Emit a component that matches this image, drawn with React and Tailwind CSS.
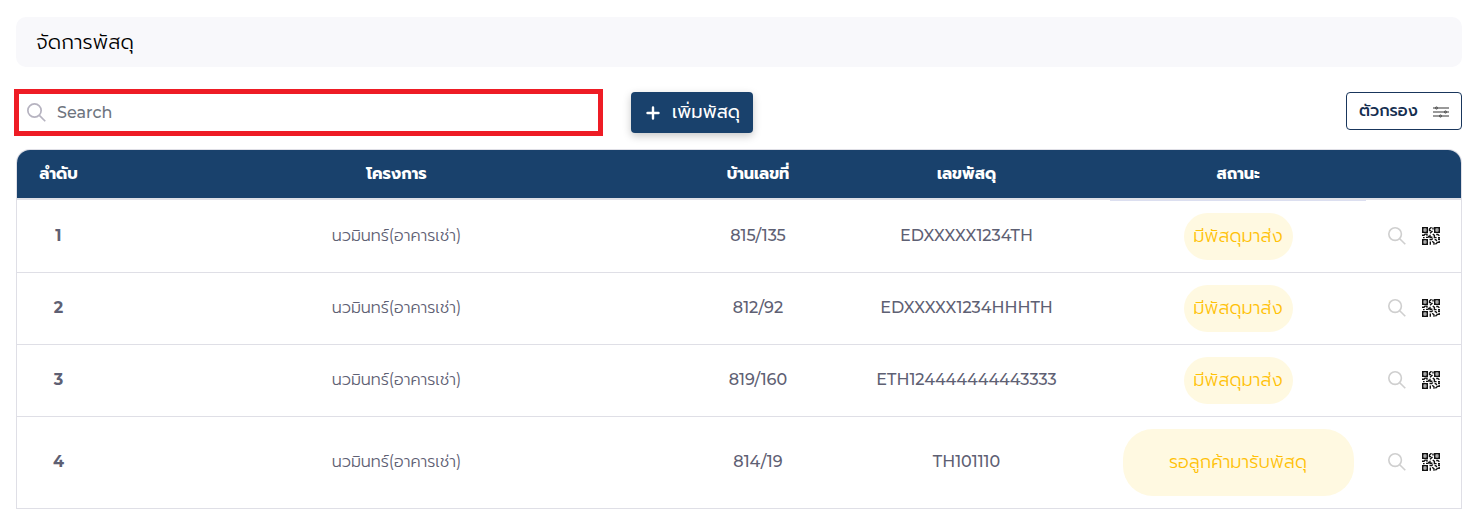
const rows = [
  { no: "1", house: "815/135", code: "EDXXXXX1234TH", status: "มีพัสดุมาส่ง", waiting: false },
  { no: "2", house: "812/92", code: "EDXXXXX1234HHHTH", status: "มีพัสดุมาส่ง", waiting: false },
  { no: "3", house: "819/160", code: "ETH124444444443333", status: "มีพัสดุมาส่ง", waiting: false },
  { no: "4", house: "814/19", code: "TH101110", status: "รอลูกค้ามารับพัสดุ", waiting: true },
];

const columns = "grid grid-cols-[83px_593px_130px_287px_256px_95px]";

function SearchIcon({ className }) {
  return (
    <svg className={className} viewBox="0 0 20 20" fill="none" stroke="currentColor" strokeWidth="1.8">
      <circle cx="7.9" cy="7.9" r="7" />
      <path d="M13 13 19.2 19.2" />
    </svg>
  );
}

function QrIcon() {
  return (
    <svg className="size-[18px]" viewBox="0 0 18 18" fill="none" stroke="#111111">
      <path strokeWidth="1.6" d="M.8.8h4.4v4.4H.8zM12.8.8h4.4v4.4h-4.4zM.8 12.8h4.4v4.4H.8z" />
      <path strokeWidth="1.4" stroke="#666666" d="M2.3 3h1.5M14.3 3h1.5M2.3 15h1.5" />
      <path
        strokeWidth="1.4"
        d="M9.5.2 7.5 2v1.6h1.6M11 .5v2M10.5 4 8 6.2M0 8.3h2l1-1.2h2v1.6M1 10.6h1.6M4 10.4h2l1.2-1.6M8 7.8v2.4h2.4M10.8 7l1.6 1.4v2.2h2.2M14.2 7.5h1.6l1.6 1.2M16 10.6h2M7.5 12.5h2.2l1-1M8.3 14.5v3.2M10.2 14.2l1.8 1.6v2M12.6 12.6h1.2l1 1.6M16 12.2h2M13.4 17.2l2-1.8h1.8v-1.6"
      />
    </svg>
  );
}

function FilterIcon() {
  return (
    <svg className="mt-px h-3 w-4" viewBox="0 0 16 12" fill="none">
      <path d="M0 2h16M0 6h16M0 10h16" stroke="#999999" strokeWidth="2" />
      <g fill="#888888" stroke="#555555" strokeWidth="1">
        <circle cx="3.5" cy="2" r="1.1" />
        <circle cx="12.5" cy="6" r="1.1" />
        <circle cx="7.5" cy="10" r="1.1" />
      </g>
    </svg>
  );
}

export default function App() {
  return (
    <div className="h-[513px] overflow-hidden bg-white pt-[17px] font-['Montserrat','Prompt','Noto_Sans_Thai','Open_Sans',sans-serif] text-base text-[#5e6073]">
      <header className="mr-[5px] ml-4 flex h-[50px] items-center rounded-[10px] bg-[#f8f8fb] pl-5">
        <h1 className="whitespace-nowrap text-xl font-light tracking-[0.12px] text-black">จัดการพัสดุ</h1>
      </header>
      <div className="mr-[5px] ml-[14px] flex h-[60px] items-start pt-[22px]">
        <label className="flex h-[47px] w-[589px] items-center border-[5px] border-[#ee1c25] pl-2">
          <SearchIcon className="size-[19px] text-[#b6b3c0]" />
          <span className="ml-[11px] whitespace-nowrap text-base font-medium text-[#6e7580]">Search</span>
        </label>
        <button className="mt-[3px] ml-7 flex h-[41px] w-[122px] items-center rounded-[4px] bg-[#19416c] pl-[15px] text-white shadow-[0_3px_8px_rgba(0,0,0,0.22)]">
          <svg className="size-[14px]" viewBox="0 0 14 14" fill="none" stroke="currentColor" strokeWidth="2.4" strokeLinecap="round">
            <path d="M7 1.5v11M1.5 7h11" />
          </svg>
          <span className="ml-3 whitespace-nowrap pb-px text-lg">เพิ่มพัสดุ</span>
        </button>
        <button className="mt-[3px] ml-auto flex h-[38px] w-[116px] items-center rounded-[4px] border border-[#19365c] pl-3 text-[#152e50]">
          <span className="w-[74px] whitespace-nowrap text-left text-base font-medium">ตัวกรอง</span>
          <FilterIcon />
        </button>
      </div>
      <section className="mt-[22px] mr-[5px] ml-4 overflow-hidden rounded-t-[14px] border border-b-0 border-[#dfdfe6]">
        <div className={`${columns} h-[50px] items-center border-b-2 border-[#dfe0e7] bg-[#19416c] text-center text-base font-bold whitespace-nowrap text-white`}>
          <span>ลำดับ</span>
          <span>โครงการ</span>
          <span>บ้านเลขที่</span>
          <span>เลขพัสดุ</span>
          <span>สถานะ</span>
          <span />
        </div>
        {rows.map((row, i) => (
          <div
            key={row.no}
            className={`${columns} items-center border-b border-[#dfdfe6] text-center font-medium whitespace-nowrap ${row.waiting ? "h-[92px]" : i === 0 ? "h-[73px]" : "h-[72px]"}`}
          >
            <span className={`font-bold ${i === 0 ? "" : "pb-0.5"}`}>{row.no}</span>
            <span className={`font-normal ${i === 0 ? "" : "pb-0.5"}`}>
              <span className="font-light">นวมินทร์</span>(<span className="font-light">อาคารเช่า</span>)
            </span>
            <span className={i === 0 ? "" : "pb-0.5"}>{row.house}</span>
            <span className={i === 0 ? "" : "pb-0.5"}>{row.code}</span>
            <span className={`flex h-full items-center justify-center ${i === 0 ? "border-t border-[#dcdff0]" : ""}`}>
              <span
                className={`flex items-center justify-center bg-[#fff9e1] pb-0.5 text-lg font-light tracking-[0.08px] text-[#ffc107] ${row.waiting ? "h-[67px] w-[231px] rounded-[30px]" : "h-[47px] w-[109px] rounded-[24px]"}`}
              >
                {row.status}
              </span>
            </span>
            <span className={`flex items-center gap-4 pl-[22px] ${i === 0 ? "" : "pb-0.5"}`}>
              <SearchIcon className="size-[18px] text-[#cfcfcf]" />
              <QrIcon />
            </span>
          </div>
        ))}
      </section>
    </div>
  );
}
